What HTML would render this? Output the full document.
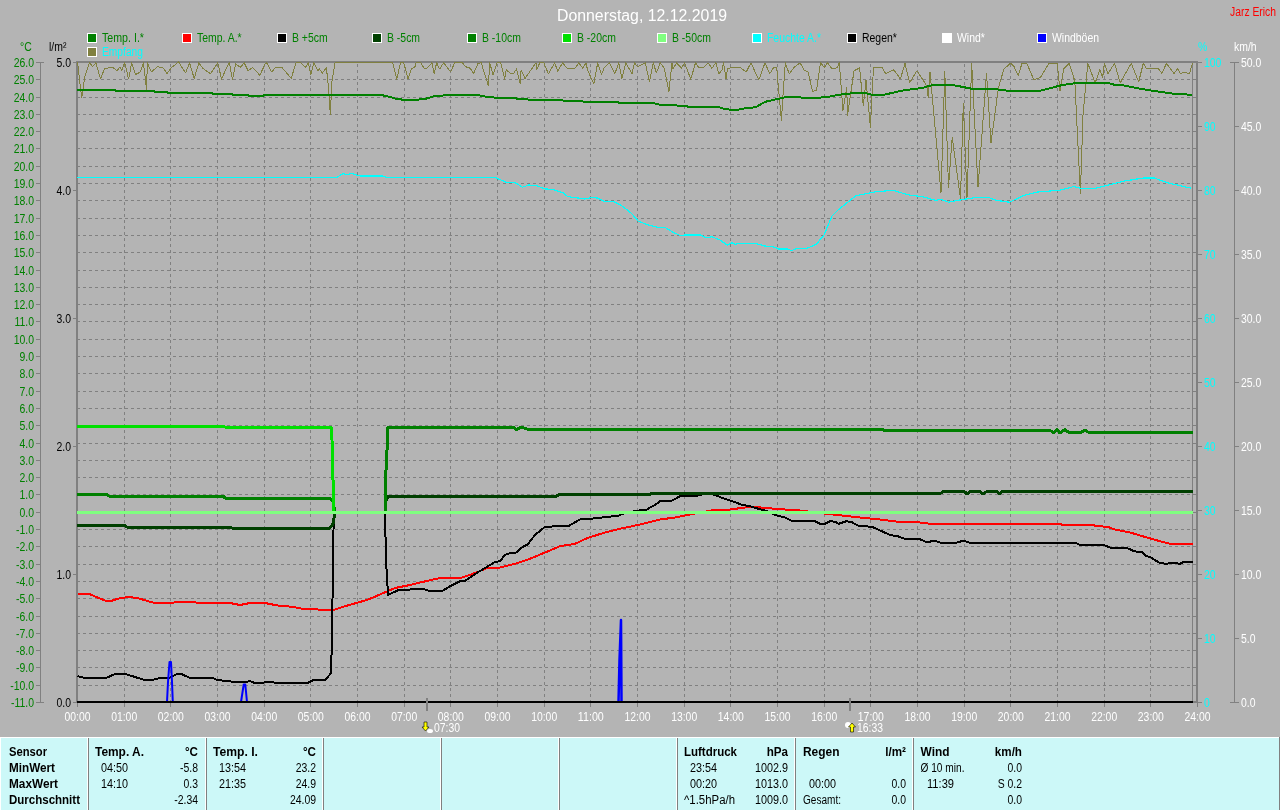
<!DOCTYPE html>
<html><head><meta charset="utf-8"><style>
html,body{margin:0;padding:0;width:1280px;height:810px;overflow:hidden;background:#b4b4b4;font-family:"Liberation Sans",sans-serif}
svg{display:block;will-change:transform}
</style></head><body><svg width="1280" height="810" viewBox="0 0 1280 810" font-family="Liberation Sans, sans-serif"><rect x="0" y="0" width="1280" height="810" fill="#b4b4b4"/><text x="557" y="21" fill="#ffffff" font-size="16" text-anchor="start" textLength="170.00" lengthAdjust="spacingAndGlyphs">Donnerstag, 12.12.2019</text><text x="1230" y="16" fill="#ff0000" font-size="12" text-anchor="start" textLength="46.00" lengthAdjust="spacingAndGlyphs">Jarz Erich</text><rect x="87" y="33" width="10" height="10" fill="#ffffff"/><rect x="88" y="34" width="8" height="8" fill="#008000"/><text x="102" y="42" fill="#008000" font-size="12" text-anchor="start" textLength="42.00" lengthAdjust="spacingAndGlyphs">Temp. I.*</text><rect x="182" y="33" width="10" height="10" fill="#ffffff"/><rect x="183" y="34" width="8" height="8" fill="#ff0000"/><text x="197" y="42" fill="#008000" font-size="12" text-anchor="start" textLength="44.67" lengthAdjust="spacingAndGlyphs">Temp. A.*</text><rect x="277" y="33" width="10" height="10" fill="#ffffff"/><rect x="278" y="34" width="8" height="8" fill="#000000"/><text x="292" y="42" fill="#008000" font-size="12" text-anchor="start" textLength="35.68" lengthAdjust="spacingAndGlyphs">B +5cm</text><rect x="372" y="33" width="10" height="10" fill="#ffffff"/><rect x="373" y="34" width="8" height="8" fill="#004000"/><text x="387" y="42" fill="#008000" font-size="12" text-anchor="start" textLength="33.06" lengthAdjust="spacingAndGlyphs">B -5cm</text><rect x="467" y="33" width="10" height="10" fill="#ffffff"/><rect x="468" y="34" width="8" height="8" fill="#008000"/><text x="482" y="42" fill="#008000" font-size="12" text-anchor="start" textLength="38.86" lengthAdjust="spacingAndGlyphs">B -10cm</text><rect x="562" y="33" width="10" height="10" fill="#ffffff"/><rect x="563" y="34" width="8" height="8" fill="#00e000"/><text x="577" y="42" fill="#008000" font-size="12" text-anchor="start" textLength="38.86" lengthAdjust="spacingAndGlyphs">B -20cm</text><rect x="657" y="33" width="10" height="10" fill="#ffffff"/><rect x="658" y="34" width="8" height="8" fill="#80ff80"/><text x="672" y="42" fill="#008000" font-size="12" text-anchor="start" textLength="38.86" lengthAdjust="spacingAndGlyphs">B -50cm</text><rect x="752" y="33" width="10" height="10" fill="#ffffff"/><rect x="753" y="34" width="8" height="8" fill="#00ffff"/><text x="767" y="42" fill="#00ffff" font-size="12" text-anchor="start" textLength="53.95" lengthAdjust="spacingAndGlyphs">Feuchte A.*</text><rect x="847" y="33" width="10" height="10" fill="#ffffff"/><rect x="848" y="34" width="8" height="8" fill="#000000"/><text x="862" y="42" fill="#000000" font-size="12" text-anchor="start" textLength="34.83" lengthAdjust="spacingAndGlyphs">Regen*</text><rect x="942" y="33" width="10" height="10" fill="#ffffff"/><rect x="943" y="34" width="8" height="8" fill="#ffffff"/><text x="957" y="42" fill="#ffffff" font-size="12" text-anchor="start" textLength="27.85" lengthAdjust="spacingAndGlyphs">Wind*</text><rect x="1037" y="33" width="10" height="10" fill="#ffffff"/><rect x="1038" y="34" width="8" height="8" fill="#0000ff"/><text x="1052" y="42" fill="#ffffff" font-size="12" text-anchor="start" textLength="47.01" lengthAdjust="spacingAndGlyphs">Windböen</text><rect x="87" y="47" width="10" height="10" fill="#ffffff"/><rect x="88" y="48" width="8" height="8" fill="#808040"/><text x="102" y="56" fill="#00ffff" font-size="12" text-anchor="start" textLength="41.00" lengthAdjust="spacingAndGlyphs">Empfang</text><text x="20" y="51" fill="#008000" font-size="12" text-anchor="start" textLength="11.72" lengthAdjust="spacingAndGlyphs">°C</text><text x="49" y="51" fill="#000000" font-size="12" text-anchor="start" textLength="17.40" lengthAdjust="spacingAndGlyphs">l/m²</text><text x="1198" y="51" fill="#00ffff" font-size="12" text-anchor="start" textLength="9.28" lengthAdjust="spacingAndGlyphs">%</text><text x="1234" y="51" fill="#ffffff" font-size="12" text-anchor="start" textLength="22.62" lengthAdjust="spacingAndGlyphs">km/h</text><g shape-rendering="crispEdges"><line x1="77" y1="79.5" x2="1191" y2="79.5" stroke="#808080" stroke-width="1" stroke-dasharray="3 3"/><line x1="1192" y1="79.5" x2="1196" y2="79.5" stroke="#808080" stroke-width="1"/><line x1="77" y1="97.5" x2="1191" y2="97.5" stroke="#808080" stroke-width="1" stroke-dasharray="3 3"/><line x1="1192" y1="97.5" x2="1196" y2="97.5" stroke="#808080" stroke-width="1"/><line x1="77" y1="114.5" x2="1191" y2="114.5" stroke="#808080" stroke-width="1" stroke-dasharray="3 3"/><line x1="1192" y1="114.5" x2="1196" y2="114.5" stroke="#808080" stroke-width="1"/><line x1="77" y1="131.5" x2="1191" y2="131.5" stroke="#808080" stroke-width="1" stroke-dasharray="3 3"/><line x1="1192" y1="131.5" x2="1196" y2="131.5" stroke="#808080" stroke-width="1"/><line x1="77" y1="148.5" x2="1191" y2="148.5" stroke="#808080" stroke-width="1" stroke-dasharray="3 3"/><line x1="1192" y1="148.5" x2="1196" y2="148.5" stroke="#808080" stroke-width="1"/><line x1="77" y1="166.5" x2="1191" y2="166.5" stroke="#808080" stroke-width="1" stroke-dasharray="3 3"/><line x1="1192" y1="166.5" x2="1196" y2="166.5" stroke="#808080" stroke-width="1"/><line x1="77" y1="183.5" x2="1191" y2="183.5" stroke="#808080" stroke-width="1" stroke-dasharray="3 3"/><line x1="1192" y1="183.5" x2="1196" y2="183.5" stroke="#808080" stroke-width="1"/><line x1="77" y1="200.5" x2="1191" y2="200.5" stroke="#808080" stroke-width="1" stroke-dasharray="3 3"/><line x1="1192" y1="200.5" x2="1196" y2="200.5" stroke="#808080" stroke-width="1"/><line x1="77" y1="218.5" x2="1191" y2="218.5" stroke="#808080" stroke-width="1" stroke-dasharray="3 3"/><line x1="1192" y1="218.5" x2="1196" y2="218.5" stroke="#808080" stroke-width="1"/><line x1="77" y1="235.5" x2="1191" y2="235.5" stroke="#808080" stroke-width="1" stroke-dasharray="3 3"/><line x1="1192" y1="235.5" x2="1196" y2="235.5" stroke="#808080" stroke-width="1"/><line x1="77" y1="252.5" x2="1191" y2="252.5" stroke="#808080" stroke-width="1" stroke-dasharray="3 3"/><line x1="1192" y1="252.5" x2="1196" y2="252.5" stroke="#808080" stroke-width="1"/><line x1="77" y1="270.5" x2="1191" y2="270.5" stroke="#808080" stroke-width="1" stroke-dasharray="3 3"/><line x1="1192" y1="270.5" x2="1196" y2="270.5" stroke="#808080" stroke-width="1"/><line x1="77" y1="287.5" x2="1191" y2="287.5" stroke="#808080" stroke-width="1" stroke-dasharray="3 3"/><line x1="1192" y1="287.5" x2="1196" y2="287.5" stroke="#808080" stroke-width="1"/><line x1="77" y1="304.5" x2="1191" y2="304.5" stroke="#808080" stroke-width="1" stroke-dasharray="3 3"/><line x1="1192" y1="304.5" x2="1196" y2="304.5" stroke="#808080" stroke-width="1"/><line x1="77" y1="321.5" x2="1191" y2="321.5" stroke="#808080" stroke-width="1" stroke-dasharray="3 3"/><line x1="1192" y1="321.5" x2="1196" y2="321.5" stroke="#808080" stroke-width="1"/><line x1="77" y1="339.5" x2="1191" y2="339.5" stroke="#808080" stroke-width="1" stroke-dasharray="3 3"/><line x1="1192" y1="339.5" x2="1196" y2="339.5" stroke="#808080" stroke-width="1"/><line x1="77" y1="356.5" x2="1191" y2="356.5" stroke="#808080" stroke-width="1" stroke-dasharray="3 3"/><line x1="1192" y1="356.5" x2="1196" y2="356.5" stroke="#808080" stroke-width="1"/><line x1="77" y1="373.5" x2="1191" y2="373.5" stroke="#808080" stroke-width="1" stroke-dasharray="3 3"/><line x1="1192" y1="373.5" x2="1196" y2="373.5" stroke="#808080" stroke-width="1"/><line x1="77" y1="391.5" x2="1191" y2="391.5" stroke="#808080" stroke-width="1" stroke-dasharray="3 3"/><line x1="1192" y1="391.5" x2="1196" y2="391.5" stroke="#808080" stroke-width="1"/><line x1="77" y1="408.5" x2="1191" y2="408.5" stroke="#808080" stroke-width="1" stroke-dasharray="3 3"/><line x1="1192" y1="408.5" x2="1196" y2="408.5" stroke="#808080" stroke-width="1"/><line x1="77" y1="425.5" x2="1191" y2="425.5" stroke="#808080" stroke-width="1" stroke-dasharray="3 3"/><line x1="1192" y1="425.5" x2="1196" y2="425.5" stroke="#808080" stroke-width="1"/><line x1="77" y1="443.5" x2="1191" y2="443.5" stroke="#808080" stroke-width="1" stroke-dasharray="3 3"/><line x1="1192" y1="443.5" x2="1196" y2="443.5" stroke="#808080" stroke-width="1"/><line x1="77" y1="460.5" x2="1191" y2="460.5" stroke="#808080" stroke-width="1" stroke-dasharray="3 3"/><line x1="1192" y1="460.5" x2="1196" y2="460.5" stroke="#808080" stroke-width="1"/><line x1="77" y1="477.5" x2="1191" y2="477.5" stroke="#808080" stroke-width="1" stroke-dasharray="3 3"/><line x1="1192" y1="477.5" x2="1196" y2="477.5" stroke="#808080" stroke-width="1"/><line x1="77" y1="494.5" x2="1191" y2="494.5" stroke="#808080" stroke-width="1" stroke-dasharray="3 3"/><line x1="1192" y1="494.5" x2="1196" y2="494.5" stroke="#808080" stroke-width="1"/><line x1="77" y1="512.5" x2="1191" y2="512.5" stroke="#808080" stroke-width="1" stroke-dasharray="3 3"/><line x1="1192" y1="512.5" x2="1196" y2="512.5" stroke="#808080" stroke-width="1"/><line x1="77" y1="529.5" x2="1191" y2="529.5" stroke="#808080" stroke-width="1" stroke-dasharray="3 3"/><line x1="1192" y1="529.5" x2="1196" y2="529.5" stroke="#808080" stroke-width="1"/><line x1="77" y1="546.5" x2="1191" y2="546.5" stroke="#808080" stroke-width="1" stroke-dasharray="3 3"/><line x1="1192" y1="546.5" x2="1196" y2="546.5" stroke="#808080" stroke-width="1"/><line x1="77" y1="564.5" x2="1191" y2="564.5" stroke="#808080" stroke-width="1" stroke-dasharray="3 3"/><line x1="1192" y1="564.5" x2="1196" y2="564.5" stroke="#808080" stroke-width="1"/><line x1="77" y1="581.5" x2="1191" y2="581.5" stroke="#808080" stroke-width="1" stroke-dasharray="3 3"/><line x1="1192" y1="581.5" x2="1196" y2="581.5" stroke="#808080" stroke-width="1"/><line x1="77" y1="598.5" x2="1191" y2="598.5" stroke="#808080" stroke-width="1" stroke-dasharray="3 3"/><line x1="1192" y1="598.5" x2="1196" y2="598.5" stroke="#808080" stroke-width="1"/><line x1="77" y1="616.5" x2="1191" y2="616.5" stroke="#808080" stroke-width="1" stroke-dasharray="3 3"/><line x1="1192" y1="616.5" x2="1196" y2="616.5" stroke="#808080" stroke-width="1"/><line x1="77" y1="633.5" x2="1191" y2="633.5" stroke="#808080" stroke-width="1" stroke-dasharray="3 3"/><line x1="1192" y1="633.5" x2="1196" y2="633.5" stroke="#808080" stroke-width="1"/><line x1="77" y1="650.5" x2="1191" y2="650.5" stroke="#808080" stroke-width="1" stroke-dasharray="3 3"/><line x1="1192" y1="650.5" x2="1196" y2="650.5" stroke="#808080" stroke-width="1"/><line x1="77" y1="667.5" x2="1191" y2="667.5" stroke="#808080" stroke-width="1" stroke-dasharray="3 3"/><line x1="1192" y1="667.5" x2="1196" y2="667.5" stroke="#808080" stroke-width="1"/><line x1="77" y1="685.5" x2="1191" y2="685.5" stroke="#808080" stroke-width="1" stroke-dasharray="3 3"/><line x1="1192" y1="685.5" x2="1196" y2="685.5" stroke="#808080" stroke-width="1"/><line x1="124.5" y1="64" x2="124.5" y2="707" stroke="#808080" stroke-width="1" stroke-dasharray="3 3"/><line x1="170.5" y1="64" x2="170.5" y2="707" stroke="#808080" stroke-width="1" stroke-dasharray="3 3"/><line x1="217.5" y1="64" x2="217.5" y2="707" stroke="#808080" stroke-width="1" stroke-dasharray="3 3"/><line x1="264.5" y1="64" x2="264.5" y2="707" stroke="#808080" stroke-width="1" stroke-dasharray="3 3"/><line x1="310.5" y1="64" x2="310.5" y2="707" stroke="#808080" stroke-width="1" stroke-dasharray="3 3"/><line x1="357.5" y1="64" x2="357.5" y2="707" stroke="#808080" stroke-width="1" stroke-dasharray="3 3"/><line x1="404.5" y1="64" x2="404.5" y2="707" stroke="#808080" stroke-width="1" stroke-dasharray="3 3"/><line x1="450.5" y1="64" x2="450.5" y2="707" stroke="#808080" stroke-width="1" stroke-dasharray="3 3"/><line x1="497.5" y1="64" x2="497.5" y2="707" stroke="#808080" stroke-width="1" stroke-dasharray="3 3"/><line x1="544.5" y1="64" x2="544.5" y2="707" stroke="#808080" stroke-width="1" stroke-dasharray="3 3"/><line x1="590.5" y1="64" x2="590.5" y2="707" stroke="#808080" stroke-width="1" stroke-dasharray="3 3"/><line x1="637.5" y1="64" x2="637.5" y2="707" stroke="#808080" stroke-width="1" stroke-dasharray="3 3"/><line x1="684.5" y1="64" x2="684.5" y2="707" stroke="#808080" stroke-width="1" stroke-dasharray="3 3"/><line x1="730.5" y1="64" x2="730.5" y2="707" stroke="#808080" stroke-width="1" stroke-dasharray="3 3"/><line x1="777.5" y1="64" x2="777.5" y2="707" stroke="#808080" stroke-width="1" stroke-dasharray="3 3"/><line x1="824.5" y1="64" x2="824.5" y2="707" stroke="#808080" stroke-width="1" stroke-dasharray="3 3"/><line x1="870.5" y1="64" x2="870.5" y2="707" stroke="#808080" stroke-width="1" stroke-dasharray="3 3"/><line x1="917.5" y1="64" x2="917.5" y2="707" stroke="#808080" stroke-width="1" stroke-dasharray="3 3"/><line x1="964.5" y1="64" x2="964.5" y2="707" stroke="#808080" stroke-width="1" stroke-dasharray="3 3"/><line x1="1010.5" y1="64" x2="1010.5" y2="707" stroke="#808080" stroke-width="1" stroke-dasharray="3 3"/><line x1="1057.5" y1="64" x2="1057.5" y2="707" stroke="#808080" stroke-width="1" stroke-dasharray="3 3"/><line x1="1104.5" y1="64" x2="1104.5" y2="707" stroke="#808080" stroke-width="1" stroke-dasharray="3 3"/><line x1="1150.5" y1="64" x2="1150.5" y2="707" stroke="#808080" stroke-width="1" stroke-dasharray="3 3"/></g><rect x="76" y="61" width="1122" height="2" fill="#808080"/><rect x="76" y="61" width="2" height="642" fill="#808080"/><rect x="1196" y="61" width="2" height="642" fill="#808080"/><rect x="76" y="701" width="1122" height="2" fill="#808080"/><rect x="1192" y="63" width="1" height="639" fill="#808080"/><rect x="77" y="703" width="1" height="4" fill="#808080"/><rect x="124" y="703" width="1" height="4" fill="#808080"/><rect x="170" y="703" width="1" height="4" fill="#808080"/><rect x="217" y="703" width="1" height="4" fill="#808080"/><rect x="264" y="703" width="1" height="4" fill="#808080"/><rect x="310" y="703" width="1" height="4" fill="#808080"/><rect x="357" y="703" width="1" height="4" fill="#808080"/><rect x="404" y="703" width="1" height="4" fill="#808080"/><rect x="450" y="703" width="1" height="4" fill="#808080"/><rect x="497" y="703" width="1" height="4" fill="#808080"/><rect x="544" y="703" width="1" height="4" fill="#808080"/><rect x="590" y="703" width="1" height="4" fill="#808080"/><rect x="637" y="703" width="1" height="4" fill="#808080"/><rect x="684" y="703" width="1" height="4" fill="#808080"/><rect x="730" y="703" width="1" height="4" fill="#808080"/><rect x="777" y="703" width="1" height="4" fill="#808080"/><rect x="824" y="703" width="1" height="4" fill="#808080"/><rect x="870" y="703" width="1" height="4" fill="#808080"/><rect x="917" y="703" width="1" height="4" fill="#808080"/><rect x="964" y="703" width="1" height="4" fill="#808080"/><rect x="1010" y="703" width="1" height="4" fill="#808080"/><rect x="1057" y="703" width="1" height="4" fill="#808080"/><rect x="1104" y="703" width="1" height="4" fill="#808080"/><rect x="1150" y="703" width="1" height="4" fill="#808080"/><rect x="1197" y="703" width="1" height="4" fill="#808080"/><rect x="40" y="62" width="1" height="641" fill="#808080"/><rect x="36" y="62" width="8" height="1" fill="#808080"/><text x="34" y="67" fill="#008000" font-size="12" text-anchor="end" textLength="20.31" lengthAdjust="spacingAndGlyphs">26.0</text><rect x="36" y="79" width="4" height="1" fill="#808080"/><text x="34" y="84" fill="#008000" font-size="12" text-anchor="end" textLength="20.31" lengthAdjust="spacingAndGlyphs">25.0</text><rect x="36" y="97" width="4" height="1" fill="#808080"/><text x="34" y="102" fill="#008000" font-size="12" text-anchor="end" textLength="20.31" lengthAdjust="spacingAndGlyphs">24.0</text><rect x="36" y="114" width="4" height="1" fill="#808080"/><text x="34" y="119" fill="#008000" font-size="12" text-anchor="end" textLength="20.31" lengthAdjust="spacingAndGlyphs">23.0</text><rect x="36" y="131" width="4" height="1" fill="#808080"/><text x="34" y="136" fill="#008000" font-size="12" text-anchor="end" textLength="20.31" lengthAdjust="spacingAndGlyphs">22.0</text><rect x="36" y="148" width="4" height="1" fill="#808080"/><text x="34" y="153" fill="#008000" font-size="12" text-anchor="end" textLength="20.31" lengthAdjust="spacingAndGlyphs">21.0</text><rect x="36" y="166" width="4" height="1" fill="#808080"/><text x="34" y="171" fill="#008000" font-size="12" text-anchor="end" textLength="20.31" lengthAdjust="spacingAndGlyphs">20.0</text><rect x="36" y="183" width="4" height="1" fill="#808080"/><text x="34" y="188" fill="#008000" font-size="12" text-anchor="end" textLength="20.31" lengthAdjust="spacingAndGlyphs">19.0</text><rect x="36" y="200" width="4" height="1" fill="#808080"/><text x="34" y="205" fill="#008000" font-size="12" text-anchor="end" textLength="20.31" lengthAdjust="spacingAndGlyphs">18.0</text><rect x="36" y="218" width="4" height="1" fill="#808080"/><text x="34" y="223" fill="#008000" font-size="12" text-anchor="end" textLength="20.31" lengthAdjust="spacingAndGlyphs">17.0</text><rect x="36" y="235" width="4" height="1" fill="#808080"/><text x="34" y="240" fill="#008000" font-size="12" text-anchor="end" textLength="20.31" lengthAdjust="spacingAndGlyphs">16.0</text><rect x="36" y="252" width="4" height="1" fill="#808080"/><text x="34" y="257" fill="#008000" font-size="12" text-anchor="end" textLength="20.31" lengthAdjust="spacingAndGlyphs">15.0</text><rect x="36" y="270" width="4" height="1" fill="#808080"/><text x="34" y="275" fill="#008000" font-size="12" text-anchor="end" textLength="20.31" lengthAdjust="spacingAndGlyphs">14.0</text><rect x="36" y="287" width="4" height="1" fill="#808080"/><text x="34" y="292" fill="#008000" font-size="12" text-anchor="end" textLength="20.31" lengthAdjust="spacingAndGlyphs">13.0</text><rect x="36" y="304" width="4" height="1" fill="#808080"/><text x="34" y="309" fill="#008000" font-size="12" text-anchor="end" textLength="20.31" lengthAdjust="spacingAndGlyphs">12.0</text><rect x="36" y="321" width="4" height="1" fill="#808080"/><text x="34" y="326" fill="#008000" font-size="12" text-anchor="end" textLength="19.53" lengthAdjust="spacingAndGlyphs">11.0</text><rect x="36" y="339" width="4" height="1" fill="#808080"/><text x="34" y="344" fill="#008000" font-size="12" text-anchor="end" textLength="20.31" lengthAdjust="spacingAndGlyphs">10.0</text><rect x="36" y="356" width="4" height="1" fill="#808080"/><text x="34" y="361" fill="#008000" font-size="12" text-anchor="end" textLength="14.50" lengthAdjust="spacingAndGlyphs">9.0</text><rect x="36" y="373" width="4" height="1" fill="#808080"/><text x="34" y="378" fill="#008000" font-size="12" text-anchor="end" textLength="14.50" lengthAdjust="spacingAndGlyphs">8.0</text><rect x="36" y="391" width="4" height="1" fill="#808080"/><text x="34" y="396" fill="#008000" font-size="12" text-anchor="end" textLength="14.50" lengthAdjust="spacingAndGlyphs">7.0</text><rect x="36" y="408" width="4" height="1" fill="#808080"/><text x="34" y="413" fill="#008000" font-size="12" text-anchor="end" textLength="14.50" lengthAdjust="spacingAndGlyphs">6.0</text><rect x="36" y="425" width="4" height="1" fill="#808080"/><text x="34" y="430" fill="#008000" font-size="12" text-anchor="end" textLength="14.50" lengthAdjust="spacingAndGlyphs">5.0</text><rect x="36" y="443" width="4" height="1" fill="#808080"/><text x="34" y="448" fill="#008000" font-size="12" text-anchor="end" textLength="14.50" lengthAdjust="spacingAndGlyphs">4.0</text><rect x="36" y="460" width="4" height="1" fill="#808080"/><text x="34" y="465" fill="#008000" font-size="12" text-anchor="end" textLength="14.50" lengthAdjust="spacingAndGlyphs">3.0</text><rect x="36" y="477" width="4" height="1" fill="#808080"/><text x="34" y="482" fill="#008000" font-size="12" text-anchor="end" textLength="14.50" lengthAdjust="spacingAndGlyphs">2.0</text><rect x="36" y="494" width="4" height="1" fill="#808080"/><text x="34" y="499" fill="#008000" font-size="12" text-anchor="end" textLength="14.50" lengthAdjust="spacingAndGlyphs">1.0</text><rect x="36" y="512" width="4" height="1" fill="#808080"/><text x="34" y="517" fill="#008000" font-size="12" text-anchor="end" textLength="14.50" lengthAdjust="spacingAndGlyphs">0.0</text><rect x="36" y="529" width="4" height="1" fill="#808080"/><text x="34" y="534" fill="#008000" font-size="12" text-anchor="end" textLength="17.98" lengthAdjust="spacingAndGlyphs">-1.0</text><rect x="36" y="546" width="4" height="1" fill="#808080"/><text x="34" y="551" fill="#008000" font-size="12" text-anchor="end" textLength="17.98" lengthAdjust="spacingAndGlyphs">-2.0</text><rect x="36" y="564" width="4" height="1" fill="#808080"/><text x="34" y="569" fill="#008000" font-size="12" text-anchor="end" textLength="17.98" lengthAdjust="spacingAndGlyphs">-3.0</text><rect x="36" y="581" width="4" height="1" fill="#808080"/><text x="34" y="586" fill="#008000" font-size="12" text-anchor="end" textLength="17.98" lengthAdjust="spacingAndGlyphs">-4.0</text><rect x="36" y="598" width="4" height="1" fill="#808080"/><text x="34" y="603" fill="#008000" font-size="12" text-anchor="end" textLength="17.98" lengthAdjust="spacingAndGlyphs">-5.0</text><rect x="36" y="616" width="4" height="1" fill="#808080"/><text x="34" y="621" fill="#008000" font-size="12" text-anchor="end" textLength="17.98" lengthAdjust="spacingAndGlyphs">-6.0</text><rect x="36" y="633" width="4" height="1" fill="#808080"/><text x="34" y="638" fill="#008000" font-size="12" text-anchor="end" textLength="17.98" lengthAdjust="spacingAndGlyphs">-7.0</text><rect x="36" y="650" width="4" height="1" fill="#808080"/><text x="34" y="655" fill="#008000" font-size="12" text-anchor="end" textLength="17.98" lengthAdjust="spacingAndGlyphs">-8.0</text><rect x="36" y="667" width="4" height="1" fill="#808080"/><text x="34" y="672" fill="#008000" font-size="12" text-anchor="end" textLength="17.98" lengthAdjust="spacingAndGlyphs">-9.0</text><rect x="36" y="685" width="4" height="1" fill="#808080"/><text x="34" y="690" fill="#008000" font-size="12" text-anchor="end" textLength="23.79" lengthAdjust="spacingAndGlyphs">-10.0</text><rect x="36" y="702" width="8" height="1" fill="#808080"/><text x="34" y="707" fill="#008000" font-size="12" text-anchor="end" textLength="23.01" lengthAdjust="spacingAndGlyphs">-11.0</text><rect x="73" y="62" width="3" height="1" fill="#808080"/><text x="71" y="67" fill="#000000" font-size="12" text-anchor="end" textLength="14.50" lengthAdjust="spacingAndGlyphs">5.0</text><rect x="73" y="190" width="3" height="1" fill="#808080"/><text x="71" y="195" fill="#000000" font-size="12" text-anchor="end" textLength="14.50" lengthAdjust="spacingAndGlyphs">4.0</text><rect x="73" y="318" width="3" height="1" fill="#808080"/><text x="71" y="323" fill="#000000" font-size="12" text-anchor="end" textLength="14.50" lengthAdjust="spacingAndGlyphs">3.0</text><rect x="73" y="446" width="3" height="1" fill="#808080"/><text x="71" y="451" fill="#000000" font-size="12" text-anchor="end" textLength="14.50" lengthAdjust="spacingAndGlyphs">2.0</text><rect x="73" y="574" width="3" height="1" fill="#808080"/><text x="71" y="579" fill="#000000" font-size="12" text-anchor="end" textLength="14.50" lengthAdjust="spacingAndGlyphs">1.0</text><rect x="73" y="702" width="3" height="1" fill="#808080"/><text x="71" y="707" fill="#000000" font-size="12" text-anchor="end" textLength="14.50" lengthAdjust="spacingAndGlyphs">0.0</text><rect x="1234" y="62" width="1" height="641" fill="#808080"/><rect x="1198" y="62" width="4" height="1" fill="#808080"/><text x="1204" y="67" fill="#00ffff" font-size="12" text-anchor="start" textLength="17.41" lengthAdjust="spacingAndGlyphs">100</text><rect x="1230" y="62" width="9" height="1" fill="#808080"/><text x="1241" y="67" fill="#ffffff" font-size="12" text-anchor="start" textLength="20.31" lengthAdjust="spacingAndGlyphs">50.0</text><rect x="1198" y="126" width="4" height="1" fill="#808080"/><text x="1204" y="131" fill="#00ffff" font-size="12" text-anchor="start" textLength="11.61" lengthAdjust="spacingAndGlyphs">90</text><rect x="1235" y="126" width="4" height="1" fill="#808080"/><text x="1241" y="131" fill="#ffffff" font-size="12" text-anchor="start" textLength="20.31" lengthAdjust="spacingAndGlyphs">45.0</text><rect x="1198" y="190" width="4" height="1" fill="#808080"/><text x="1204" y="195" fill="#00ffff" font-size="12" text-anchor="start" textLength="11.61" lengthAdjust="spacingAndGlyphs">80</text><rect x="1235" y="190" width="4" height="1" fill="#808080"/><text x="1241" y="195" fill="#ffffff" font-size="12" text-anchor="start" textLength="20.31" lengthAdjust="spacingAndGlyphs">40.0</text><rect x="1198" y="254" width="4" height="1" fill="#808080"/><text x="1204" y="259" fill="#00ffff" font-size="12" text-anchor="start" textLength="11.61" lengthAdjust="spacingAndGlyphs">70</text><rect x="1235" y="254" width="4" height="1" fill="#808080"/><text x="1241" y="259" fill="#ffffff" font-size="12" text-anchor="start" textLength="20.31" lengthAdjust="spacingAndGlyphs">35.0</text><rect x="1198" y="318" width="4" height="1" fill="#808080"/><text x="1204" y="323" fill="#00ffff" font-size="12" text-anchor="start" textLength="11.61" lengthAdjust="spacingAndGlyphs">60</text><rect x="1235" y="318" width="4" height="1" fill="#808080"/><text x="1241" y="323" fill="#ffffff" font-size="12" text-anchor="start" textLength="20.31" lengthAdjust="spacingAndGlyphs">30.0</text><rect x="1198" y="382" width="4" height="1" fill="#808080"/><text x="1204" y="387" fill="#00ffff" font-size="12" text-anchor="start" textLength="11.61" lengthAdjust="spacingAndGlyphs">50</text><rect x="1235" y="382" width="4" height="1" fill="#808080"/><text x="1241" y="387" fill="#ffffff" font-size="12" text-anchor="start" textLength="20.31" lengthAdjust="spacingAndGlyphs">25.0</text><rect x="1198" y="446" width="4" height="1" fill="#808080"/><text x="1204" y="451" fill="#00ffff" font-size="12" text-anchor="start" textLength="11.61" lengthAdjust="spacingAndGlyphs">40</text><rect x="1235" y="446" width="4" height="1" fill="#808080"/><text x="1241" y="451" fill="#ffffff" font-size="12" text-anchor="start" textLength="20.31" lengthAdjust="spacingAndGlyphs">20.0</text><rect x="1198" y="510" width="4" height="1" fill="#808080"/><text x="1204" y="515" fill="#00ffff" font-size="12" text-anchor="start" textLength="11.61" lengthAdjust="spacingAndGlyphs">30</text><rect x="1235" y="510" width="4" height="1" fill="#808080"/><text x="1241" y="515" fill="#ffffff" font-size="12" text-anchor="start" textLength="20.31" lengthAdjust="spacingAndGlyphs">15.0</text><rect x="1198" y="574" width="4" height="1" fill="#808080"/><text x="1204" y="579" fill="#00ffff" font-size="12" text-anchor="start" textLength="11.61" lengthAdjust="spacingAndGlyphs">20</text><rect x="1235" y="574" width="4" height="1" fill="#808080"/><text x="1241" y="579" fill="#ffffff" font-size="12" text-anchor="start" textLength="20.31" lengthAdjust="spacingAndGlyphs">10.0</text><rect x="1198" y="638" width="4" height="1" fill="#808080"/><text x="1204" y="643" fill="#00ffff" font-size="12" text-anchor="start" textLength="11.61" lengthAdjust="spacingAndGlyphs">10</text><rect x="1235" y="638" width="4" height="1" fill="#808080"/><text x="1241" y="643" fill="#ffffff" font-size="12" text-anchor="start" textLength="14.50" lengthAdjust="spacingAndGlyphs">5.0</text><rect x="1198" y="702" width="4" height="1" fill="#808080"/><text x="1204" y="707" fill="#00ffff" font-size="12" text-anchor="start" textLength="5.80" lengthAdjust="spacingAndGlyphs">0</text><rect x="1230" y="702" width="9" height="1" fill="#808080"/><text x="1241" y="707" fill="#ffffff" font-size="12" text-anchor="start" textLength="14.50" lengthAdjust="spacingAndGlyphs">0.0</text><text x="77.5" y="721" fill="#ffffff" font-size="12" text-anchor="middle" textLength="26.00" lengthAdjust="spacingAndGlyphs">00:00</text><text x="124.16666666666666" y="721" fill="#ffffff" font-size="12" text-anchor="middle" textLength="26.00" lengthAdjust="spacingAndGlyphs">01:00</text><text x="170.83333333333331" y="721" fill="#ffffff" font-size="12" text-anchor="middle" textLength="26.00" lengthAdjust="spacingAndGlyphs">02:00</text><text x="217.5" y="721" fill="#ffffff" font-size="12" text-anchor="middle" textLength="26.00" lengthAdjust="spacingAndGlyphs">03:00</text><text x="264.16666666666663" y="721" fill="#ffffff" font-size="12" text-anchor="middle" textLength="26.00" lengthAdjust="spacingAndGlyphs">04:00</text><text x="310.83333333333337" y="721" fill="#ffffff" font-size="12" text-anchor="middle" textLength="26.00" lengthAdjust="spacingAndGlyphs">05:00</text><text x="357.5" y="721" fill="#ffffff" font-size="12" text-anchor="middle" textLength="26.00" lengthAdjust="spacingAndGlyphs">06:00</text><text x="404.1666666666667" y="721" fill="#ffffff" font-size="12" text-anchor="middle" textLength="26.00" lengthAdjust="spacingAndGlyphs">07:00</text><text x="450.8333333333333" y="721" fill="#ffffff" font-size="12" text-anchor="middle" textLength="26.00" lengthAdjust="spacingAndGlyphs">08:00</text><text x="497.5" y="721" fill="#ffffff" font-size="12" text-anchor="middle" textLength="26.00" lengthAdjust="spacingAndGlyphs">09:00</text><text x="544.1666666666667" y="721" fill="#ffffff" font-size="12" text-anchor="middle" textLength="26.00" lengthAdjust="spacingAndGlyphs">10:00</text><text x="590.8333333333334" y="721" fill="#ffffff" font-size="12" text-anchor="middle" textLength="26.00" lengthAdjust="spacingAndGlyphs">11:00</text><text x="637.5" y="721" fill="#ffffff" font-size="12" text-anchor="middle" textLength="26.00" lengthAdjust="spacingAndGlyphs">12:00</text><text x="684.1666666666666" y="721" fill="#ffffff" font-size="12" text-anchor="middle" textLength="26.00" lengthAdjust="spacingAndGlyphs">13:00</text><text x="730.8333333333334" y="721" fill="#ffffff" font-size="12" text-anchor="middle" textLength="26.00" lengthAdjust="spacingAndGlyphs">14:00</text><text x="777.5" y="721" fill="#ffffff" font-size="12" text-anchor="middle" textLength="26.00" lengthAdjust="spacingAndGlyphs">15:00</text><text x="824.1666666666666" y="721" fill="#ffffff" font-size="12" text-anchor="middle" textLength="26.00" lengthAdjust="spacingAndGlyphs">16:00</text><text x="870.8333333333334" y="721" fill="#ffffff" font-size="12" text-anchor="middle" textLength="26.00" lengthAdjust="spacingAndGlyphs">17:00</text><text x="917.5" y="721" fill="#ffffff" font-size="12" text-anchor="middle" textLength="26.00" lengthAdjust="spacingAndGlyphs">18:00</text><text x="964.1666666666666" y="721" fill="#ffffff" font-size="12" text-anchor="middle" textLength="26.00" lengthAdjust="spacingAndGlyphs">19:00</text><text x="1010.8333333333334" y="721" fill="#ffffff" font-size="12" text-anchor="middle" textLength="26.00" lengthAdjust="spacingAndGlyphs">20:00</text><text x="1057.5" y="721" fill="#ffffff" font-size="12" text-anchor="middle" textLength="26.00" lengthAdjust="spacingAndGlyphs">21:00</text><text x="1104.1666666666667" y="721" fill="#ffffff" font-size="12" text-anchor="middle" textLength="26.00" lengthAdjust="spacingAndGlyphs">22:00</text><text x="1150.8333333333333" y="721" fill="#ffffff" font-size="12" text-anchor="middle" textLength="26.00" lengthAdjust="spacingAndGlyphs">23:00</text><text x="1197.5" y="721" fill="#ffffff" font-size="12" text-anchor="middle" textLength="26.00" lengthAdjust="spacingAndGlyphs">24:00</text><g shape-rendering="crispEdges"><polyline points="77.5,62.0 81.7,98.0 84.8,77.0 89.5,62.8 92.7,66.7 95.8,62.8 100.5,79.0 104.4,69.0 112.0,67.0 117.0,70.6 120.0,67.0 121.6,70.6 124.7,62.8 128.6,79.0 131.7,62.8 135.6,74.5 140.3,72.0 143.4,62.8 146.6,89.4 147.3,62.8 151.3,72.0 157.5,66.7 163.8,68.3 166.9,73.8 171.6,67.5 178.6,62.0 185.6,73.0 189.5,62.8 194.2,78.4 198.9,62.8 202.8,68.3 210.6,73.8 217.7,62.8 221.6,79.2 226.2,68.3 229.4,62.8 232.5,80.0 235.6,63.6 240.3,67.5 244.2,62.8 248.1,70.6 252.8,67.5 259.8,75.3 265.3,63.6 267.0,62.8 271.7,72.0 275.6,67.5 281.9,67.5 291.2,78.4 296.0,62.8 300.6,62.8 305.3,67.5 308.4,62.8 310.8,74.5 313.9,62.8 317.8,70.6 319.4,69.0 322.5,73.0 326.4,67.5 328.8,91.0 330.3,115.0 331.9,81.6 335.0,62.8 392.8,62.8 396.7,79.2 400.6,62.8 403.8,62.8 408.0,79.2 411.6,68.3 414.7,67.5 416.2,62.8 421.0,62.8 424.0,68.3 427.0,68.3 431.9,62.8 434.2,73.8 436.6,62.8 439.7,69.0 443.6,62.8 450.6,72.0 454.7,62.8 462.5,62.8 465.6,66.7 470.3,68.3 473.4,73.8 478.0,63.6 481.2,62.8 488.3,85.5 489.8,62.8 493.0,75.3 496.9,62.8 500.8,62.8 504.7,79.2 506.2,69.8 510.0,73.0 514.0,73.0 516.4,69.0 520.3,83.9 521.1,69.8 525.0,78.4 536.0,62.8 536.7,69.8 539.8,62.8 543.8,62.8 548.4,73.8 554.7,62.8 557.8,71.4 562.5,62.8 567.2,68.3 575.0,68.3 578.9,62.8 582.8,68.3 586.0,62.8 587.5,69.8 593.8,83.9 597.7,62.8 601.6,74.5 603.9,68.3 609.4,62.8 614.8,73.8 618.8,62.8 621.9,78.4 625.8,62.8 632.0,73.8 634.4,62.8 637.5,66.7 645.3,62.8 649.4,81.6 653.3,62.8 656.4,73.0 660.3,62.8 664.2,68.3 668.9,91.7 672.0,62.8 672.8,69.0 676.7,62.8 681.4,68.3 684.5,62.8 690.8,79.2 695.5,62.8 698.6,67.5 703.3,67.5 708.0,62.8 711.9,68.3 715.8,62.8 718.9,73.8 722.0,69.8 723.6,62.8 726.0,79.2 727.5,68.3 733.8,67.5 740.0,67.5 746.2,72.0 751.0,62.8 758.8,80.0 765.0,62.8 769.7,73.8 773.6,67.5 776.7,67.5 779.0,94.0 781.4,120.6 783.0,95.6 785.3,62.8 789.2,73.8 794.0,67.5 800.0,62.8 804.0,69.8 808.0,72.0 812.7,91.7 816.6,90.0 820.5,62.8 824.4,67.5 827.5,62.8 832.2,69.0 837.6,67.5 839.3,62.4 843.0,110.5 846.7,87.4 847.6,115.2 854.0,70.7 859.6,68.0 863.3,106.0 866.0,80.0 870.4,127.2 873.5,67.0 881.9,67.0 885.6,73.5 893.9,69.8 900.4,79.0 905.0,63.3 909.6,82.8 917.0,70.7 927.2,86.5 928.1,97.6 930.0,71.7 941.0,193.0 944.8,71.7 948.5,187.4 952.2,137.4 960.5,198.5 963.3,103.0 967.0,197.6 971.7,63.3 978.0,187.4 986.5,73.5 991.0,143.0 998.5,87.4 1004.0,68.9 1010.5,63.3 1013.7,66.0 1018.3,75.4 1022.0,63.3 1026.7,63.3 1034.0,80.0 1040.6,77.2 1048.9,63.3 1057.2,63.3 1060.0,91.0 1063.7,68.9 1069.3,63.3 1074.8,81.0 1080.4,193.9 1083.0,115.2 1087.8,63.3 1095.2,82.8 1099.8,69.8 1102.6,78.0 1104.4,63.3 1108.0,73.5 1114.6,63.3 1120.2,82.8 1131.3,63.3 1138.7,81.9 1143.3,63.3 1146.0,68.0 1158.0,68.0 1161.9,73.5 1166.5,63.3 1173.9,73.5 1177.6,68.9 1180.4,73.5 1184.0,72.6 1189.6,73.5 1192.4,63.3" fill="none" stroke="#808040" stroke-width="1" stroke-linejoin="round" stroke-linecap="butt"/><polyline points="77.0,89.7 115.0,89.7 115.5,91.0 154.0,91.0 154.5,92.0 167.0,92.0 167.5,92.8 212.0,92.8 212.5,93.8 232.0,93.8 232.5,94.8 248.0,94.8 248.5,96.0 260.0,96.0 268.6,94.8 380.3,94.8 389.7,96.9 396.0,98.8 405.3,100.0 414.7,100.0 425.6,98.8 433.4,96.4 439.7,96.0 447.5,94.8 478.0,94.8 481.0,96.0 493.8,97.5 515.6,98.0 517.0,99.0 528.0,99.5 529.7,100.3 562.5,100.3 565.0,101.0 582.8,101.4 584.4,101.9 617.0,101.9 619.5,103.0 652.5,103.0 660.3,104.7 676.0,105.0 677.5,105.8 687.0,106.0 688.4,106.9 718.0,106.9 724.4,109.0 730.6,109.7 738.4,109.7 746.2,108.0 755.6,107.3 765.0,101.9 772.8,100.0 780.6,98.4 786.9,96.9 799.4,96.9 802.5,98.0 819.7,98.0 822.8,96.9 832.2,96.4 835.3,95.3 844.8,93.9 857.8,93.0 865.2,93.0 872.6,94.8 883.7,94.8 904.0,90.2 922.6,88.0 930.0,85.6 944.8,84.6 956.0,85.6 972.6,88.9 993.0,88.9 1007.8,90.7 1040.6,90.7 1060.0,85.6 1071.0,83.7 1082.2,82.8 1108.1,82.8 1113.7,84.6 1124.8,85.6 1143.3,89.3 1158.0,91.5 1174.8,93.9 1192.4,94.8" fill="none" stroke="#008000" stroke-width="2" stroke-linejoin="round" stroke-linecap="butt"/><polyline points="77.5,593.8 88.8,593.8 96.2,597.0 105.0,600.5 112.5,600.5 117.5,598.8 127.5,597.0 137.5,598.0 152.5,602.5 170.0,603.0 177.5,602.0 192.5,602.0 200.0,603.0 230.0,603.0 240.0,605.0 250.0,603.0 265.0,603.0 277.5,605.5 292.5,606.8 302.5,608.8 317.5,609.5 325.0,610.0 335.0,609.5 347.5,605.5 360.0,602.0 370.0,598.8 380.0,594.5 395.0,588.0 410.0,585.0 420.0,582.5 440.0,578.0 462.5,577.5 475.0,573.0 487.5,568.0 500.0,567.5 515.0,563.8 530.0,558.8 545.0,552.5 560.0,546.2 575.0,543.8 587.5,538.0 605.0,532.5 620.0,528.8 640.0,524.5 660.0,519.5 675.0,517.5 690.0,514.5 711.0,510.5 730.0,509.5 745.0,507.5 755.0,507.0 775.0,508.8 800.0,510.5 830.0,514.2 855.0,517.0 880.0,519.5 900.0,522.0 916.2,522.0 930.0,523.8 1060.0,523.8 1062.5,525.0 1092.5,525.0 1097.5,526.2 1107.5,526.8 1115.0,529.5 1130.0,532.5 1142.5,536.2 1157.5,540.5 1170.0,543.8 1192.5,543.8" fill="none" stroke="#ff0000" stroke-width="2" stroke-linejoin="round" stroke-linecap="butt"/><polyline points="77.5,676.2 85.0,678.0 95.0,677.5 106.2,678.0 113.8,674.5 125.0,673.8 135.0,677.0 146.2,680.5 153.8,679.5 162.5,677.5 170.0,677.5 177.5,673.8 182.5,674.5 190.0,678.0 212.5,678.0 217.5,680.0 240.0,682.5 250.0,681.2 255.0,683.0 272.5,682.0 275.0,683.0 307.5,683.0 312.5,680.5 325.0,680.0 331.2,673.0 332.5,600.0 333.5,530.0 334.0,512.0 385.0,512.0 386.0,560.0 388.0,595.0 397.5,590.5 410.0,589.5 422.5,588.8 428.8,590.8 442.5,590.8 450.0,586.2 460.0,581.2 465.0,580.8 477.5,572.5 495.0,562.0 500.0,561.2 505.0,555.0 510.0,553.0 516.2,552.5 522.5,547.0 527.5,544.5 535.0,535.0 545.0,526.8 568.8,525.8 580.0,519.5 600.0,518.0 605.0,516.8 617.5,516.2 621.2,514.2 630.0,512.0 638.8,510.5 646.2,510.0 650.0,507.5 655.0,505.0 660.0,501.2 672.5,500.5 680.0,496.2 698.8,495.5 707.0,493.0 715.0,495.0 722.5,498.0 732.5,501.2 742.5,505.0 750.0,506.2 762.5,510.0 770.0,512.0 775.0,515.0 785.0,517.5 792.5,521.2 815.0,521.2 820.0,523.8 825.0,523.8 830.0,521.2 835.0,521.8 838.8,523.8 846.2,521.2 852.5,522.5 857.5,525.5 872.5,527.0 890.0,535.0 897.5,536.2 905.0,538.8 918.8,538.8 927.5,542.5 933.8,540.5 941.2,543.0 957.5,542.5 963.8,540.5 970.0,543.0 1076.2,543.0 1080.0,545.0 1103.8,545.0 1110.0,547.5 1126.2,547.5 1133.8,551.2 1142.5,552.5 1146.2,556.2 1150.0,557.0 1160.0,563.2 1167.5,563.8 1171.2,562.5 1180.0,563.8 1183.8,561.8 1192.5,561.8" fill="none" stroke="#000000" stroke-width="2" stroke-linejoin="round" stroke-linecap="butt"/><polyline points="77.0,525.5 125.0,525.5 127.0,527.0 230.0,527.0 232.0,528.0 330.0,528.0 333.0,524.0 335.0,512.0" fill="none" stroke="#004000" stroke-width="3" stroke-linejoin="round" stroke-linecap="butt"/><polyline points="385.0,512.0 386.2,498.8 388.8,496.2 556.2,496.2 560.0,494.2 650.0,494.2 652.5,493.0 941.2,493.0 943.8,491.2 963.8,491.2 967.0,493.8 971.2,491.2 978.8,491.2 983.0,493.8 987.5,491.2 996.2,491.2 999.5,493.8 1003.0,491.2 1192.5,491.2" fill="none" stroke="#004000" stroke-width="3" stroke-linejoin="round" stroke-linecap="butt"/><polyline points="77.0,494.5 107.0,494.5 109.0,496.0 223.0,496.0 225.0,498.0 330.0,498.0 333.0,502.0 335.0,512.0" fill="none" stroke="#008000" stroke-width="3" stroke-linejoin="round" stroke-linecap="butt"/><polyline points="385.0,512.0 386.0,470.0 387.5,440.0 388.0,427.5 513.8,427.5 516.2,429.5 521.2,427.0 527.5,429.2 882.5,429.2 883.8,430.5 1050.0,430.5 1053.8,432.5 1057.0,429.5 1060.0,433.0 1065.0,429.5 1068.8,432.5 1081.2,432.5 1085.0,430.0 1088.8,432.5 1192.5,432.5" fill="none" stroke="#008000" stroke-width="3" stroke-linejoin="round" stroke-linecap="butt"/><polyline points="77.0,426.0 223.0,426.0 225.0,427.0 331.0,427.0 332.0,440.0 333.0,480.0 334.0,512.0" fill="none" stroke="#00e000" stroke-width="3" stroke-linejoin="round" stroke-linecap="butt"/></g><rect x="77" y="511" width="1116" height="3" fill="#80ff80"/><g shape-rendering="crispEdges"><polyline points="77.0,177.2 337.0,177.2 343.0,173.5 347.0,175.0 351.0,173.4 360.0,176.0 383.0,176.0 386.0,177.2 494.4,177.2 506.9,182.5 514.7,182.5 522.5,187.2 528.8,185.0 536.6,185.6 544.4,188.8 553.8,189.7 563.0,192.8 567.8,196.6 585.0,199.0 591.2,197.5 597.5,198.0 603.8,201.2 613.0,201.2 622.5,206.2 631.9,213.8 638.0,221.0 647.5,224.7 656.9,227.2 664.7,227.2 672.5,231.9 680.3,235.6 685.0,235.0 700.6,235.0 706.9,238.0 711.6,236.6 719.4,239.7 727.2,245.0 731.9,242.8 735.0,244.4 739.7,243.4 749.0,243.8 755.3,243.4 764.7,246.0 772.5,246.6 778.8,249.0 788.0,249.0 791.2,250.6 797.5,248.4 806.9,248.4 816.2,244.4 824.0,235.0 831.9,216.2 838.0,210.0 846.7,203.0 856.0,195.7 874.4,192.0 893.0,190.2 907.8,194.8 922.6,196.7 935.6,200.4 941.0,199.4 948.5,202.2 963.3,199.4 978.0,197.2 989.0,197.6 996.7,200.4 1009.6,202.2 1023.0,195.7 1037.8,192.0 1060.0,190.2 1073.9,186.5 1080.4,188.3 1095.2,188.3 1106.3,185.5 1124.8,181.0 1143.3,178.0 1154.4,178.0 1167.4,182.8 1191.5,188.3" fill="none" stroke="#00ffff" stroke-width="1.2" stroke-linejoin="round" stroke-linecap="butt"/></g><rect x="77" y="701" width="1116" height="2" fill="#000000"/><polyline points="167.0,702.0 168.0,682.0 169.5,662.0 171.0,662.0 172.0,682.0 172.8,702.0" fill="none" stroke="#0000ff" stroke-width="2" stroke-linejoin="round" stroke-linecap="butt"/><polyline points="241.0,702.0 243.7,684.5 245.3,684.5 247.0,702.0" fill="none" stroke="#0000ff" stroke-width="2" stroke-linejoin="round" stroke-linecap="butt"/><polyline points="618.5,702.0 619.5,660.0 621.0,620.0 621.5,702.0" fill="none" stroke="#0000ff" stroke-width="2.5" stroke-linejoin="round" stroke-linecap="butt"/><rect x="77" y="701" width="1116" height="2" fill="#000000"/><rect x="426" y="698" width="2" height="13" fill="#808080"/><rect x="849" y="698" width="2" height="13" fill="#808080"/><path d="M424,722 h3 v5 h2 l-3.5,4 l-3.5,-4 h2 z" fill="#ffff00" stroke="#000" stroke-width="0.6"/><ellipse cx="430" cy="731" rx="3" ry="2" fill="#ffffff"/><text x="434" y="732" fill="#ffffff" font-size="12" text-anchor="start" textLength="26.00" lengthAdjust="spacingAndGlyphs">07:30</text><ellipse cx="848" cy="725" rx="3" ry="3" fill="#ffffff"/><path d="M852,723 l3.5,4 h-2 v5 h-3 v-5 h-2 z" fill="#ffff00" stroke="#000" stroke-width="0.6"/><text x="857" y="732" fill="#ffffff" font-size="12" text-anchor="start" textLength="26.00" lengthAdjust="spacingAndGlyphs">16:33</text><rect x="0" y="737" width="1280" height="73" fill="#ffffff"/><rect x="1" y="738" width="1278" height="72" fill="#ccf8f8"/><rect x="1279" y="737" width="1" height="73" fill="#808080"/><rect x="87" y="737" width="1" height="73" fill="#ffffff"/><rect x="88" y="738" width="1" height="72" fill="#808080"/><rect x="205" y="737" width="1" height="73" fill="#ffffff"/><rect x="206" y="738" width="1" height="72" fill="#808080"/><rect x="322" y="737" width="1" height="73" fill="#ffffff"/><rect x="323" y="738" width="1" height="72" fill="#808080"/><rect x="440" y="737" width="1" height="73" fill="#ffffff"/><rect x="441" y="738" width="1" height="72" fill="#808080"/><rect x="558" y="737" width="1" height="73" fill="#ffffff"/><rect x="559" y="738" width="1" height="72" fill="#808080"/><rect x="676" y="737" width="1" height="73" fill="#ffffff"/><rect x="677" y="738" width="1" height="72" fill="#808080"/><rect x="794" y="737" width="1" height="73" fill="#ffffff"/><rect x="795" y="738" width="1" height="72" fill="#808080"/><rect x="912" y="737" width="1" height="73" fill="#ffffff"/><rect x="913" y="738" width="1" height="72" fill="#808080"/><text x="9" y="756" fill="#000" font-size="12" text-anchor="start" textLength="38.00" lengthAdjust="spacingAndGlyphs" font-weight="bold">Sensor</text><text x="9" y="772" fill="#000" font-size="12" text-anchor="start" textLength="46.00" lengthAdjust="spacingAndGlyphs" font-weight="bold">MinWert</text><text x="9" y="788" fill="#000" font-size="12" text-anchor="start" textLength="49.00" lengthAdjust="spacingAndGlyphs" font-weight="bold">MaxWert</text><text x="9" y="804" fill="#000" font-size="12" text-anchor="start" textLength="71.00" lengthAdjust="spacingAndGlyphs" font-weight="bold">Durchschnitt</text><text x="95" y="756" fill="#000" font-size="12" text-anchor="start" textLength="49.00" lengthAdjust="spacingAndGlyphs" font-weight="bold">Temp. A.</text><text x="198" y="756" fill="#000" font-size="12" text-anchor="end" textLength="13.06" lengthAdjust="spacingAndGlyphs" font-weight="bold">°C</text><text x="101" y="772" fill="#000" font-size="12" text-anchor="start" textLength="27.00" lengthAdjust="spacingAndGlyphs">04:50</text><text x="198" y="772" fill="#000" font-size="12" text-anchor="end" textLength="17.98" lengthAdjust="spacingAndGlyphs">-5.8</text><text x="101" y="788" fill="#000" font-size="12" text-anchor="start" textLength="27.00" lengthAdjust="spacingAndGlyphs">14:10</text><text x="198" y="788" fill="#000" font-size="12" text-anchor="end" textLength="14.50" lengthAdjust="spacingAndGlyphs">0.3</text><text x="198" y="804" fill="#000" font-size="12" text-anchor="end" textLength="23.79" lengthAdjust="spacingAndGlyphs">-2.34</text><text x="213" y="756" fill="#000" font-size="12" text-anchor="start" textLength="45.00" lengthAdjust="spacingAndGlyphs" font-weight="bold">Temp. I.</text><text x="316" y="756" fill="#000" font-size="12" text-anchor="end" textLength="13.06" lengthAdjust="spacingAndGlyphs" font-weight="bold">°C</text><text x="219" y="772" fill="#000" font-size="12" text-anchor="start" textLength="27.00" lengthAdjust="spacingAndGlyphs">13:54</text><text x="316" y="772" fill="#000" font-size="12" text-anchor="end" textLength="20.31" lengthAdjust="spacingAndGlyphs">23.2</text><text x="219" y="788" fill="#000" font-size="12" text-anchor="start" textLength="27.00" lengthAdjust="spacingAndGlyphs">21:35</text><text x="316" y="788" fill="#000" font-size="12" text-anchor="end" textLength="20.31" lengthAdjust="spacingAndGlyphs">24.9</text><text x="316" y="804" fill="#000" font-size="12" text-anchor="end" textLength="26.11" lengthAdjust="spacingAndGlyphs">24.09</text><text x="684" y="756" fill="#000" font-size="12" text-anchor="start" textLength="53.00" lengthAdjust="spacingAndGlyphs" font-weight="bold">Luftdruck</text><text x="788" y="756" fill="#000" font-size="12" text-anchor="end" textLength="21.34" lengthAdjust="spacingAndGlyphs" font-weight="bold">hPa</text><text x="690" y="772" fill="#000" font-size="12" text-anchor="start" textLength="27.00" lengthAdjust="spacingAndGlyphs">23:54</text><text x="788" y="772" fill="#000" font-size="12" text-anchor="end" textLength="33.00" lengthAdjust="spacingAndGlyphs">1002.9</text><text x="690" y="788" fill="#000" font-size="12" text-anchor="start" textLength="27.00" lengthAdjust="spacingAndGlyphs">00:20</text><text x="788" y="788" fill="#000" font-size="12" text-anchor="end" textLength="33.00" lengthAdjust="spacingAndGlyphs">1013.0</text><text x="684" y="804" fill="#000" font-size="12" text-anchor="start" textLength="51.00" lengthAdjust="spacingAndGlyphs">^1.5hPa/h</text><text x="788" y="804" fill="#000" font-size="12" text-anchor="end" textLength="33.00" lengthAdjust="spacingAndGlyphs">1009.0</text><text x="803" y="756" fill="#000" font-size="12" text-anchor="start" textLength="36.50" lengthAdjust="spacingAndGlyphs" font-weight="bold">Regen</text><text x="906" y="756" fill="#000" font-size="12" text-anchor="end" textLength="20.69" lengthAdjust="spacingAndGlyphs" font-weight="bold">l/m²</text><text x="809" y="788" fill="#000" font-size="12" text-anchor="start" textLength="27.00" lengthAdjust="spacingAndGlyphs">00:00</text><text x="906" y="788" fill="#000" font-size="12" text-anchor="end" textLength="14.50" lengthAdjust="spacingAndGlyphs">0.0</text><text x="803" y="804" fill="#000" font-size="12" text-anchor="start" textLength="38.00" lengthAdjust="spacingAndGlyphs">Gesamt:</text><text x="906" y="804" fill="#000" font-size="12" text-anchor="end" textLength="14.50" lengthAdjust="spacingAndGlyphs">0.0</text><text x="920.5" y="756" fill="#000" font-size="12" text-anchor="start" textLength="29.00" lengthAdjust="spacingAndGlyphs" font-weight="bold">Wind</text><text x="1022" y="756" fill="#000" font-size="12" text-anchor="end" textLength="27.16" lengthAdjust="spacingAndGlyphs" font-weight="bold">km/h</text><text x="920.5" y="772" fill="#000" font-size="12" text-anchor="start" textLength="44.00" lengthAdjust="spacingAndGlyphs">Ø 10 min.</text><text x="1022" y="772" fill="#000" font-size="12" text-anchor="end" textLength="14.50" lengthAdjust="spacingAndGlyphs">0.0</text><text x="927" y="788" fill="#000" font-size="12" text-anchor="start" textLength="27.00" lengthAdjust="spacingAndGlyphs">11:39</text><text x="1022" y="788" fill="#000" font-size="12" text-anchor="end" textLength="24.36" lengthAdjust="spacingAndGlyphs">S 0.2</text><text x="1022" y="804" fill="#000" font-size="12" text-anchor="end" textLength="14.50" lengthAdjust="spacingAndGlyphs">0.0</text></svg></body></html>
